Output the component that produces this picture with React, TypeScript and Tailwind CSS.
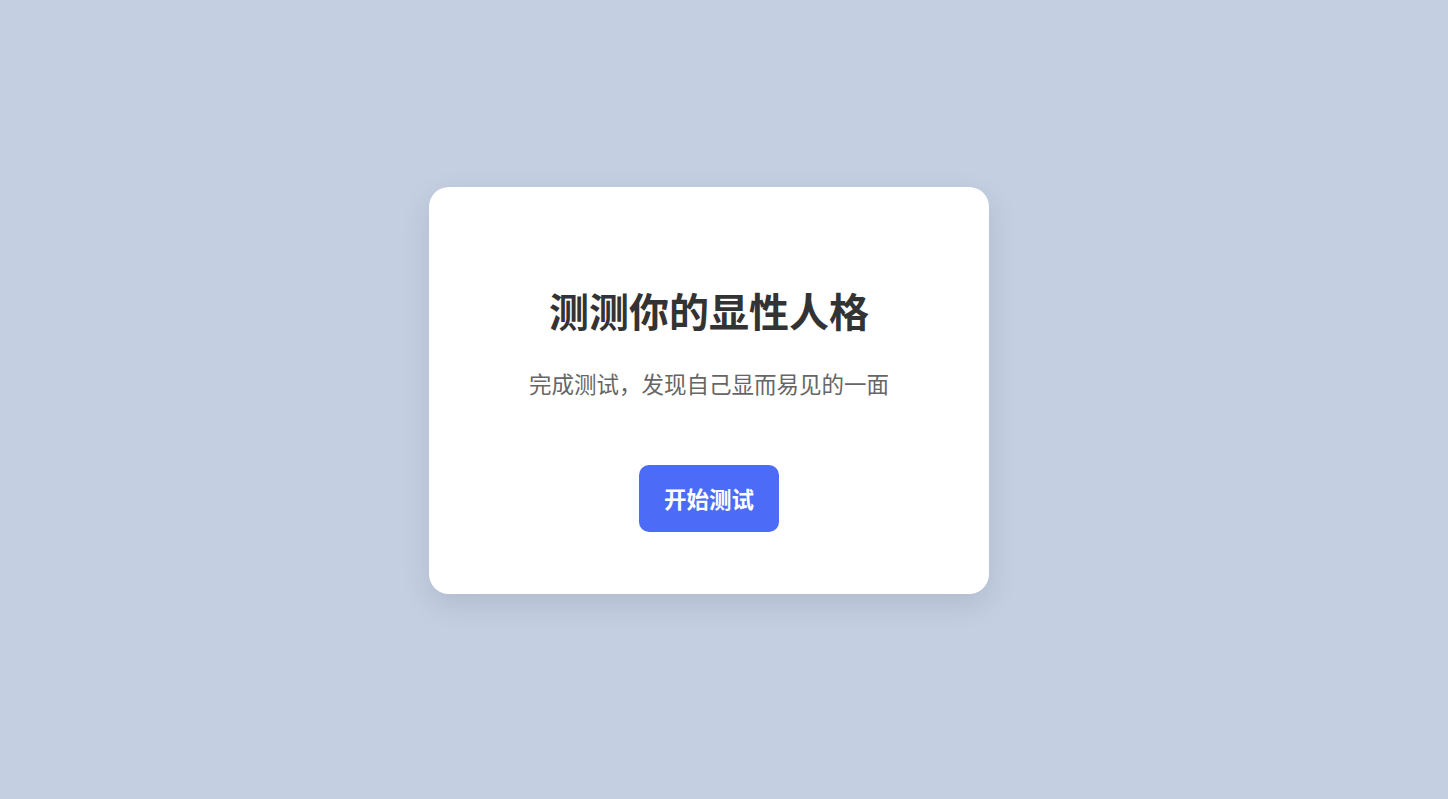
export default function App() {
    return (
        <div
            className="min-h-screen w-full bg-[#c4cfe2] flex items-center justify-center pr-[30px] pb-[18px]"
            style={{ fontFamily: '"Noto Sans CJK SC", "Noto Sans", sans-serif' }}
        >
            <div className="w-[560px] h-[407px] bg-white rounded-[20px] shadow-[0_10px_30px_rgba(0,0,0,0.1)] flex flex-col items-center pt-[99px]">
                <h1 className="text-[40px] leading-[48px] font-bold text-[#333333]">
                    测测你的显性人格
                </h1>
                <p className="mt-[33px] text-[22.5px] leading-[33px] text-[#666666]">
                    完成测试，发现自己显而易见的一面
                </p>
                <button className="mt-[65px] w-[140px] h-[67px] rounded-[10px] bg-[#4c6cf8] text-white text-[22.5px] font-bold flex items-center justify-center">
                    开始测试
                </button>
            </div>
        </div>
    );
}
